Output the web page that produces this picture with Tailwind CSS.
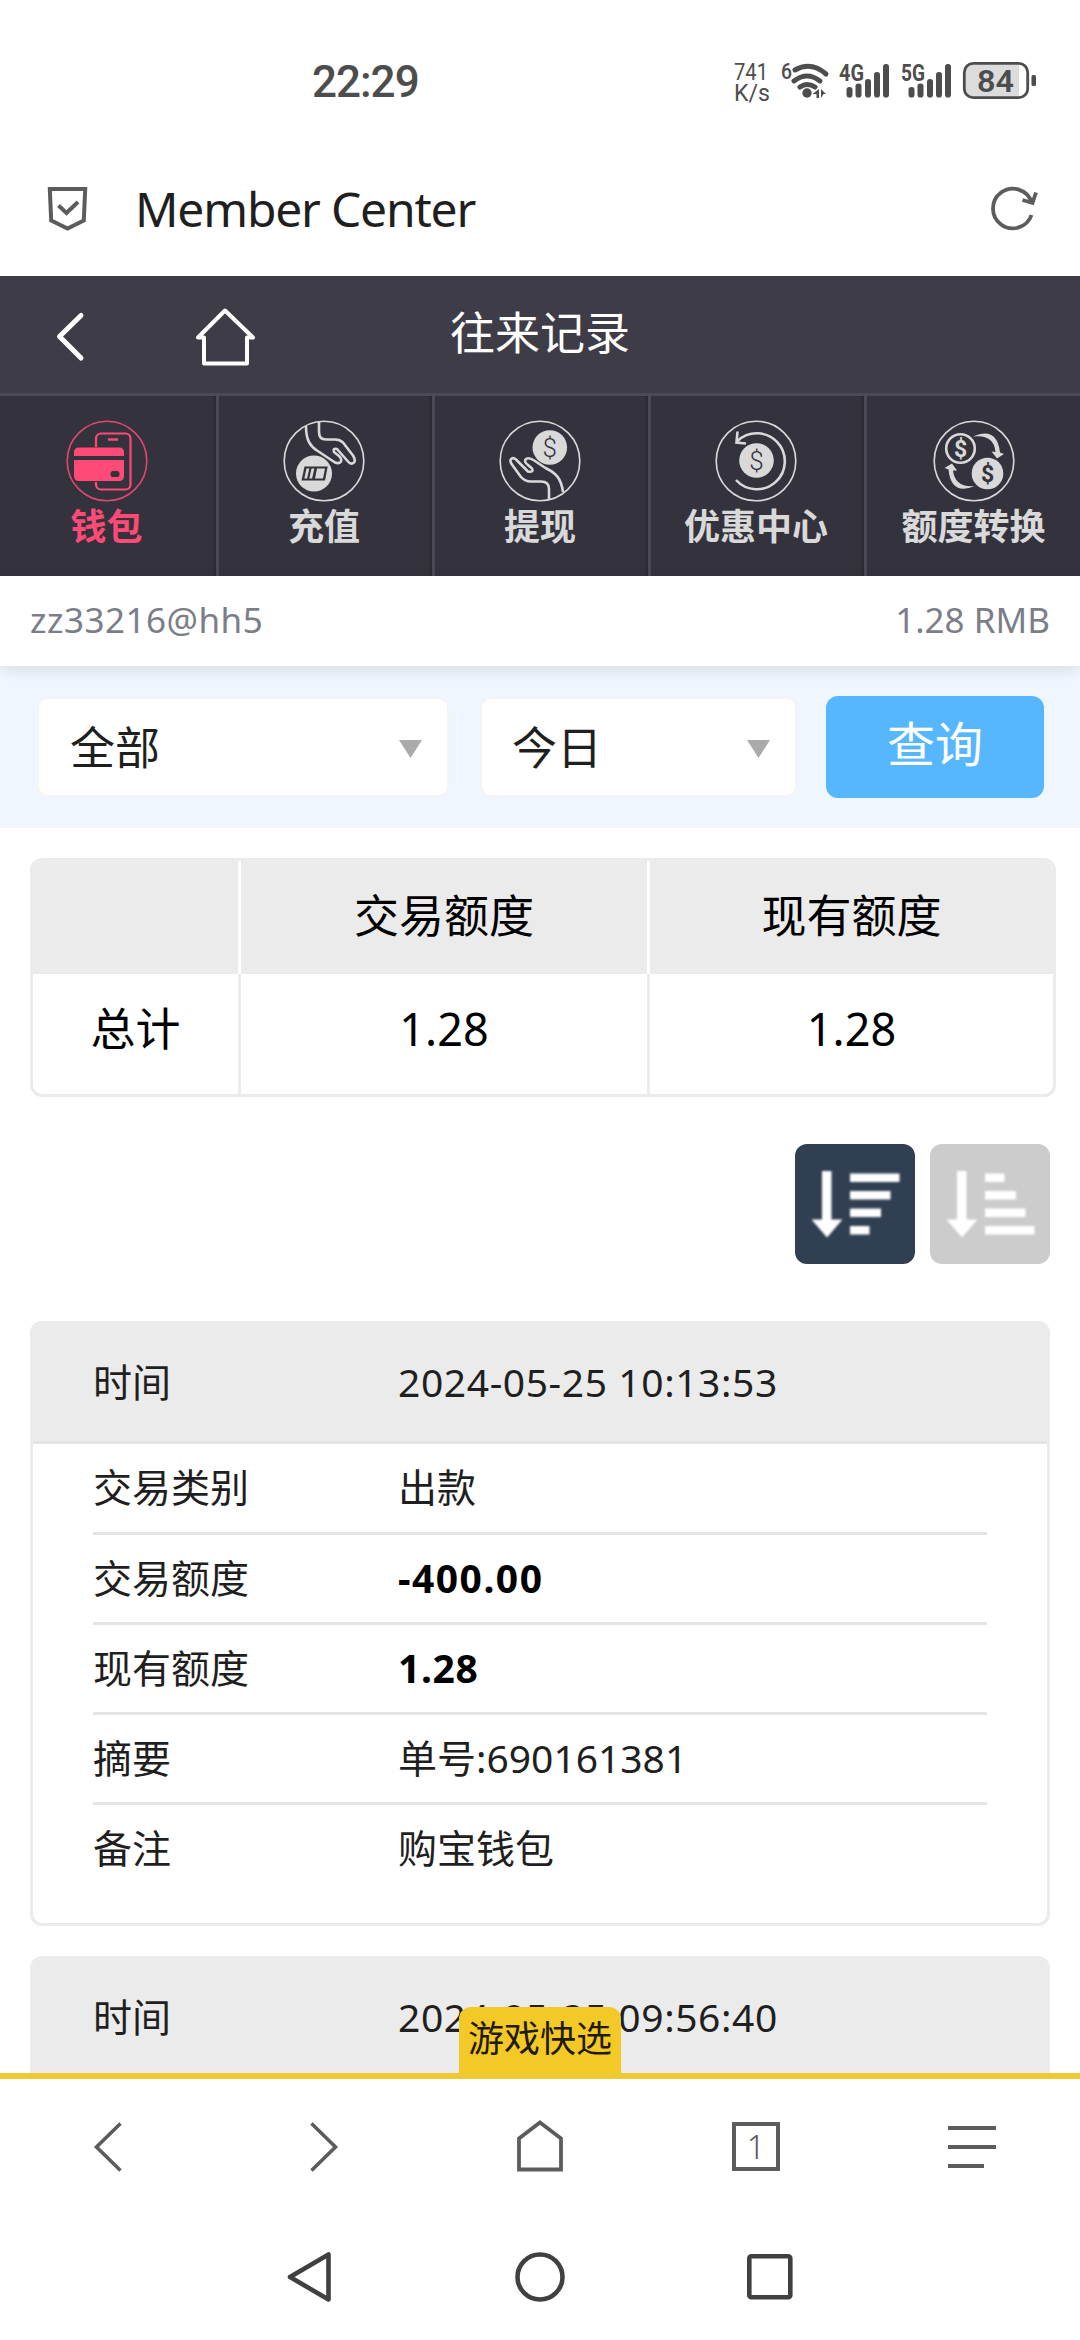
<!DOCTYPE html>
<html lang="zh-CN">
<head>
  <meta charset="UTF-8">
  <title>Member Center</title>
  <meta name="viewport" content="width=device-width, initial-scale=1.0">
  <script src="https://cdn.jsdelivr.net/npm/@tailwindcss/browser@4"></script>
</head>
<body class="w-[1080px] h-[2340px] flex flex-col bg-white text-[#1f1f1f] overflow-hidden leading-none font-['Noto_Sans','Noto_Sans_CJK_SC',sans-serif]">

  <!-- Status bar -->
  <div class="h-[140px] shrink-0 flex items-start text-[#4d4d4d] font-['Roboto',sans-serif]">
    <div class="pl-[312px] pt-[60px] text-[44px] font-medium tracking-[-1px]">22:29</div>
    <svg class="ml-auto mr-[40px] mt-[52px] shrink-0" width="310" height="56" viewBox="730 52 310 56" fill="#4d4d4d">
      <text x="734" y="80" font-size="24" textLength="34" lengthAdjust="spacingAndGlyphs">741</text>
      <text x="734" y="101" font-size="23" textLength="36" lengthAdjust="spacingAndGlyphs">K/s</text>
      <text x="781" y="79" font-size="22" font-weight="500" textLength="11" lengthAdjust="spacingAndGlyphs">6</text>
      <!-- wifi -->
      <g fill="none" stroke="#4d4d4d" stroke-width="5" stroke-linecap="round">
        <path d="M795 70Q811 61 826 74"/>
        <path d="M794 81Q807 71 820 81"/>
        <path d="M800 87Q807 82 815 87"/>
      </g>
      <circle cx="807" cy="93" r="4.700"/>
      <path d="M819 89v9h-2.500v-4h-4zM821 98v-9l5 5h-2.500z"/>
      <!-- signal 1 -->
      <text x="839" y="81" font-size="23" font-weight="700" textLength="25" lengthAdjust="spacingAndGlyphs">4G</text>
      <rect x="846.500" y="87" width="6" height="10.500" rx="2.800"/>
      <rect x="855.500" y="83.500" width="6" height="14" rx="2.800"/>
      <rect x="865" y="79" width="6" height="18.500" rx="2.800"/>
      <rect x="874" y="72" width="6" height="25.500" rx="2.800"/>
      <rect x="883" y="64" width="6" height="33.500" rx="2.800"/>
      <!-- signal 2 -->
      <text x="901" y="81" font-size="23" font-weight="700" textLength="24" lengthAdjust="spacingAndGlyphs">5G</text>
      <rect x="908.500" y="87" width="6" height="10.500" rx="2.800"/>
      <rect x="917.500" y="83.500" width="6" height="14" rx="2.800"/>
      <rect x="927" y="79" width="6" height="18.500" rx="2.800"/>
      <rect x="936" y="72" width="6" height="25.500" rx="2.800"/>
      <rect x="945" y="64" width="6" height="33.500" rx="2.800"/>
      <!-- battery -->
      <path d="M974 64h45v34h-45q-9 0-9-9v-16q0-9 9-9z" fill="#dcdcdc"/>
      <rect x="964.300" y="63.300" width="63.400" height="34.400" rx="9" fill="none" stroke="#4d4d4d" stroke-width="2.800"/>
      <rect x="1031.500" y="75" width="4.500" height="11" rx="1.500"/>
      <text x="977" y="92" font-size="32" font-weight="600" textLength="37" lengthAdjust="spacingAndGlyphs">84</text>
    </svg>
  </div>

  <!-- Browser title bar -->
  <div class="h-[136px] shrink-0 flex items-center pl-[46px] pr-[41px] pt-0.5">
    <svg width="44" height="48" viewBox="46 185 44 48" fill="none" stroke="#5c5c5c" stroke-width="4">
      <path d="M49.800 189H85.200L83.800 220.500 67.500 228.500 51.200 220.500z"/>
      <path d="M58.500 205.500L66.500 213 78 202"/>
    </svg>
    <div class="ml-[45px] text-[48px] tracking-[-1.2px]">Member Center</div>
    <svg class="ml-auto" width="48" height="48" viewBox="990 185 48 48" fill="none" stroke="#5c5c5c" stroke-width="3.800">
      <path d="M1030.500 215A19.800 19.800 0 1 1 1030.500 202"/>
      <path d="M1021.500 200L1031.500 203 1035 192.500"/>
    </svg>
  </div>

  <!-- Header -->
  <header class="h-[120px] shrink-0 grid grid-cols-3 items-center bg-[#3e3d47] border-b-3 border-[#4b4a57] text-white">
    <svg width="260" height="70" viewBox="0 301 260 70" fill="none" stroke="#fff" stroke-width="5" stroke-linecap="round" stroke-linejoin="round">
      <path d="M81 316.500L59.500 337.500 81 359"/>
      <path d="M225 311.500L253 338.500H247V364.500H204V338.500H198z" stroke-width="4"/>
    </svg>
    <h1 class="pb-1 text-[45px] text-center">往来记录</h1>
  </header>

  <!-- Wallet tabs -->
  <nav class="h-[180px] shrink-0 grid grid-cols-5 bg-[#34333d] text-[#d9d9d9] text-4xl leading-none font-bold">
    <a class="flex flex-col items-center pt-6 border-r-3 border-[#2d2c35] text-[#ff4a78]">
      <svg width="82" height="82" viewBox="0 0 82 82" fill="none" stroke="currentColor">
        <circle cx="41" cy="41" r="39.800" stroke-width="1.600" opacity=".85"/>
        <rect x="30" y="13.500" width="34.500" height="56" rx="5" stroke-width="2.200"/>
        <path d="M42 19.500h10" stroke-width="2.500"/>
        <rect x="6" y="27" width="52.500" height="35" rx="5" fill="#34333d" stroke="none"/>
        <path d="M8 36v-3.500q0-5 5-5h40q5 0 5 5V36zM8 40h50v16q0 5-5 5H13q-5 0-5-5z" fill="currentColor" stroke="none"/>
        <rect x="44.500" y="51" width="9" height="6" rx="2.500" fill="#34333d" stroke="none"/>
      </svg>
      <span class="mt-[7px]">钱包</span>
    </a>
    <a class="flex flex-col items-center pt-6 border-x-3 border-l-[#4b4a57] border-r-[#2d2c35]">
      <svg width="82" height="82" viewBox="0 0 82 82" fill="none" stroke="currentColor">
        <circle cx="41" cy="41" r="39.800" stroke-width="1.600"/>
        <path d="M23 6C23 20 27 26 34 30.500L49 40.500Q54 44.500 57 42.500 60 40 56 36L51 32Q49.500 28 54 29L65 41.500Q68 45 71 42.500 73 40.500 70 35.500L60 22.500Q57 19.500 52 19.500H43Q36 19.500 36 12V2" stroke-width="2.600" stroke-linejoin="round"/>
        <circle cx="31" cy="53.500" r="18" fill="currentColor" stroke="none"/>
        <path d="M21.500 46.500H44.700L42 60.500H18.500z" fill="#34333d" stroke="none"/>
        <path d="M23.500 48.500h2.800l-2.200 10h-2.800zM28.500 48.500h2.800l-2.200 10h-2.800zM34 48.500h8l-2 10h-8z" fill="currentColor" stroke="none"/>
      </svg>
      <span class="mt-[7px]">充值</span>
    </a>
    <a class="flex flex-col items-center pt-6 border-x-3 border-l-[#4b4a57] border-r-[#2d2c35]">
      <svg width="82" height="82" viewBox="0 0 82 82" fill="none" stroke="currentColor">
        <circle cx="41" cy="41" r="39.800" stroke-width="1.600"/>
        <path d="M64 72C62 58 57 53 46.500 48L36 41Q29 36.500 26.500 39.500 25 42 29 45L33 48.500Q35 52.500 29 51.500L17 39.500Q13.500 36.500 11.500 40 11 42 14 46L22 57Q26 61.500 32 61.500H42Q50 61.500 50 69V79" stroke-width="2.600" stroke-linejoin="round"/>
        <circle cx="50.800" cy="27.500" r="17.300" fill="currentColor" stroke="none"/>
        <text class="font-['Roboto']" x="50.800" y="36.500" font-size="26" font-weight="300" text-anchor="middle" fill="#34333d" stroke="none">$</text>
      </svg>
      <span class="mt-[7px]">提现</span>
    </a>
    <a class="flex flex-col items-center pt-6 border-x-3 border-l-[#4b4a57] border-r-[#2d2c35]">
      <svg width="82" height="82" viewBox="0 0 82 82" fill="none" stroke="currentColor">
        <circle cx="41" cy="41" r="39.800" stroke-width="1.600"/>
        <path d="M21 60A28 28 0 1 0 22.500 21" stroke-width="2.600"/>
        <path d="M22.500 11.500L21.500 22.500 31 23.500" stroke-width="2.600"/>
        <circle cx="41.500" cy="40.500" r="17.300" fill="currentColor" stroke="none"/>
        <text class="font-['Roboto']" x="41.500" y="49.500" font-size="26" font-weight="300" text-anchor="middle" fill="#34333d" stroke="none">$</text>
      </svg>
      <span class="mt-[7px]">优惠中心</span>
    </a>
    <a class="flex flex-col items-center pt-6 border-l-3 border-[#4b4a57]">
      <svg width="82" height="82" viewBox="0 0 82 82" fill="none" stroke="currentColor">
        <circle cx="41" cy="41" r="39.800" stroke-width="1.600"/>
        <circle cx="27.500" cy="28.500" r="14.300" stroke-width="2.600"/>
        <text class="font-['Roboto']" x="27.500" y="36.500" font-size="23" font-weight="700" text-anchor="middle" fill="currentColor" stroke="none">$</text>
        <circle cx="54.500" cy="53.500" r="15.800" fill="currentColor" stroke="none"/>
        <text class="font-['Roboto']" x="54.500" y="61.500" font-size="23" font-weight="700" text-anchor="middle" fill="#34333d" stroke="none">$</text>
        <path d="M40 16.500Q64 6 67 32.500L71 34 64 38.500 58.500 31.500 62.500 32Q61 14 40 16.500z" fill="currentColor" stroke="none"/>
        <path d="M42 66Q18 76 15.500 49.500L11.500 48 19 43.500 24 50.500 20 50.500Q22 68 42 66z" fill="currentColor" stroke="none"/>
      </svg>
      <span class="mt-[7px]">额度转换</span>
    </a>
  </nav>

  <!-- Account -->
  <div class="relative h-[90px] shrink-0 flex items-center justify-between px-[30px] pb-[3px] bg-white text-[#7b7e88] text-[35px] shadow-[0_4px_14px_rgba(0,0,0,0.1)]">
    <span class="tracking-[0.5px]">zz33216@hh5</span>
    <span>1.28 RMB</span>
  </div>

  <!-- Filters -->
  <div class="h-[162px] shrink-0 flex items-start pt-[30px] px-9 bg-[#f0f6ff]">
    <div class="w-[414px] h-[102px] flex items-center justify-between pl-[31px] pr-[25px] bg-white border-3 border-[#f3f4f7] rounded-xl text-[45px]">
      <span>全部</span>
      <svg class="mt-1" width="23" height="18" viewBox="0 0 23 18" fill="#aaa"><path d="M0 0H23L11.500 18z"/></svg>
    </div>
    <div class="ml-[29px] w-[319px] h-[102px] flex items-center justify-between pl-[30px] pr-[25px] bg-white border-3 border-[#f3f4f7] rounded-xl text-[45px]">
      <span>今日</span>
      <svg class="mt-1" width="23" height="18" viewBox="0 0 23 18" fill="#aaa"><path d="M0 0H23L11.500 18z"/></svg>
    </div>
    <button class="ml-7 w-[218px] h-[102px] pb-1.5 bg-[#56b7ff] rounded-xl text-white text-5xl">查询</button>
  </div>

  <!-- Totals -->
  <div class="mt-[30px] ml-[30px] w-[1026px] h-[239px] shrink-0 grid grid-cols-[208px_409px_1fr] grid-rows-[113px_1fr] border-3 border-[#ebebeb] rounded-xl overflow-hidden text-black text-[45px] text-center">
    <div class="bg-[#ebebeb] border-r-3 border-white"></div>
    <div class="bg-[#ebebeb] border-r-3 border-white pt-8">交易额度</div>
    <div class="bg-[#ebebeb] pt-8">现有额度</div>
    <div class="border-r-3 border-[#ebebeb] pt-8">总计</div>
    <div class="border-r-3 border-[#ebebeb] pt-8">1.28</div>
    <div class="pt-8">1.28</div>
  </div>

  <!-- Sort buttons -->
  <div class="mt-[47px] pr-[30px] shrink-0 flex justify-end gap-[15px]">
    <div class="size-[120px] rounded-xl bg-[#313f52]">
      <svg class="blur-[0.8px]" width="120" height="120" viewBox="0 0 120 120" fill="#fff">
        <path d="M27 27H36.500V75.500H47.500L32 93.500 16.500 75.500H27z"/>
        <path d="M55 29.500h49.500v8.500H55zM55 47h40.500v8.500H55zM55 64.500h31v8.500H55zM55 82h19.500v8.500H55z"/>
      </svg>
    </div>
    <div class="size-[120px] rounded-xl bg-[#ccc]">
      <svg class="blur-[0.8px]" width="120" height="120" viewBox="0 0 120 120" fill="#fff">
        <path d="M27 27H36.500V75.500H47.500L32 93.500 16.500 75.500H27z"/>
        <path d="M55 29.500h19.500v8.500H55zM55 47h31v8.500H55zM55 64.500h40.500v8.500H55zM55 82h49.500v8.500H55z"/>
      </svg>
    </div>
  </div>

  <!-- Records -->
  <main class="relative h-[752px] mt-[57px] px-[30px] shrink-0 overflow-hidden text-[39px]">
    <section class="h-[605px] border-3 border-[#ebebeb] rounded-xl overflow-hidden">
      <div class="h-[120px] flex items-center px-[60px] pb-[3px] bg-[#ebebeb] border-b-3 border-[#e4e4e4]">
        <span class="w-[305px]">时间</span>
        <span class="tracking-[0.6px]">2024-05-25 10:13:53</span>
      </div>
      <div class="px-[60px]">
        <div class="h-[91px] flex items-center pb-[3px] border-b-3 border-[#e4e4e4]"><span class="w-[305px]">交易类别</span><span>出款</span></div>
        <div class="h-[90px] flex items-center pb-[3px] border-b-3 border-[#e4e4e4]"><span class="w-[305px]">交易额度</span><b class="text-black tracking-[1.5px]">-400.00</b></div>
        <div class="h-[90px] flex items-center pb-[3px] border-b-3 border-[#e4e4e4]"><span class="w-[305px]">现有额度</span><b class="text-black tracking-[0.6px]">1.28</b></div>
        <div class="h-[90px] flex items-center pb-[3px] border-b-3 border-[#e4e4e4]"><span class="w-[305px]">摘要</span><span>单号:690161381</span></div>
        <div class="h-[90px] flex items-center pb-[5px]"><span class="w-[305px]">备注</span><span>购宝钱包</span></div>
      </div>
    </section>
    <section class="mt-[30px] h-[605px] border-3 border-[#ebebeb] rounded-xl overflow-hidden">
      <div class="h-[120px] flex items-center px-[60px] pb-[3px] bg-[#ebebeb] border-b-3 border-[#e4e4e4]">
        <span class="w-[305px]">时间</span>
        <span class="tracking-[0.6px]">2024-05-25 09:56:40</span>
      </div>
    </section>
    <!-- Game quick pick -->
    <div class="absolute bottom-0 left-[459px] w-[162px] h-[66px] pt-3.5 rounded-t-xl bg-[#f2c926] text-[#1f1a00] text-4xl leading-none text-center">游戏快选</div>
  </main>

  <!-- Browser toolbar -->
  <div class="h-[141px] shrink-0 grid grid-cols-5 items-center justify-items-center border-t-6 border-[#eec92f]">
    <svg width="54" height="54" viewBox="0 0 54 54" fill="none" stroke="#5c5c5c" stroke-width="3.600"><path d="M39.500 3.500L15.500 27 39.500 50.500"/></svg>
    <svg width="54" height="54" viewBox="0 0 54 54" fill="none" stroke="#5c5c5c" stroke-width="3.600"><path d="M14.500 3.500L38.500 27 14.500 50.500"/></svg>
    <svg width="54" height="54" viewBox="0 0 54 54" fill="none" stroke="#5c5c5c" stroke-width="3.800"><path d="M27 2.500L48 18.500V49.500H6V18.500z"/></svg>
    <div class="w-12 h-[49px] flex items-center justify-center border-4 border-[#5c5c5c] text-[#5c5c5c] text-[33px] font-light">1</div>
    <svg width="54" height="54" viewBox="0 0 54 54" fill="none" stroke="#5c5c5c" stroke-width="3.800"><path d="M3 8H51M3 27H51M3 46H39"/></svg>
  </div>

  <!-- System navigation -->
  <div class="h-[126px] shrink-0 flex items-center justify-center gap-[176px]">
    <svg width="54" height="54" viewBox="0 0 54 54" fill="none" stroke="#404040" stroke-width="4.600" stroke-linejoin="round"><path d="M45.500 4.500V49.500L7 27z"/></svg>
    <svg width="54" height="54" viewBox="0 0 54 54" fill="none" stroke="#404040" stroke-width="4.600"><circle cx="27" cy="27" r="22.500"/></svg>
    <svg width="54" height="54" viewBox="0 0 54 54" fill="none" stroke="#404040" stroke-width="4.600"><rect x="6.300" y="6.300" width="41" height="41" rx="2"/></svg>
  </div>
</body>
</html>
